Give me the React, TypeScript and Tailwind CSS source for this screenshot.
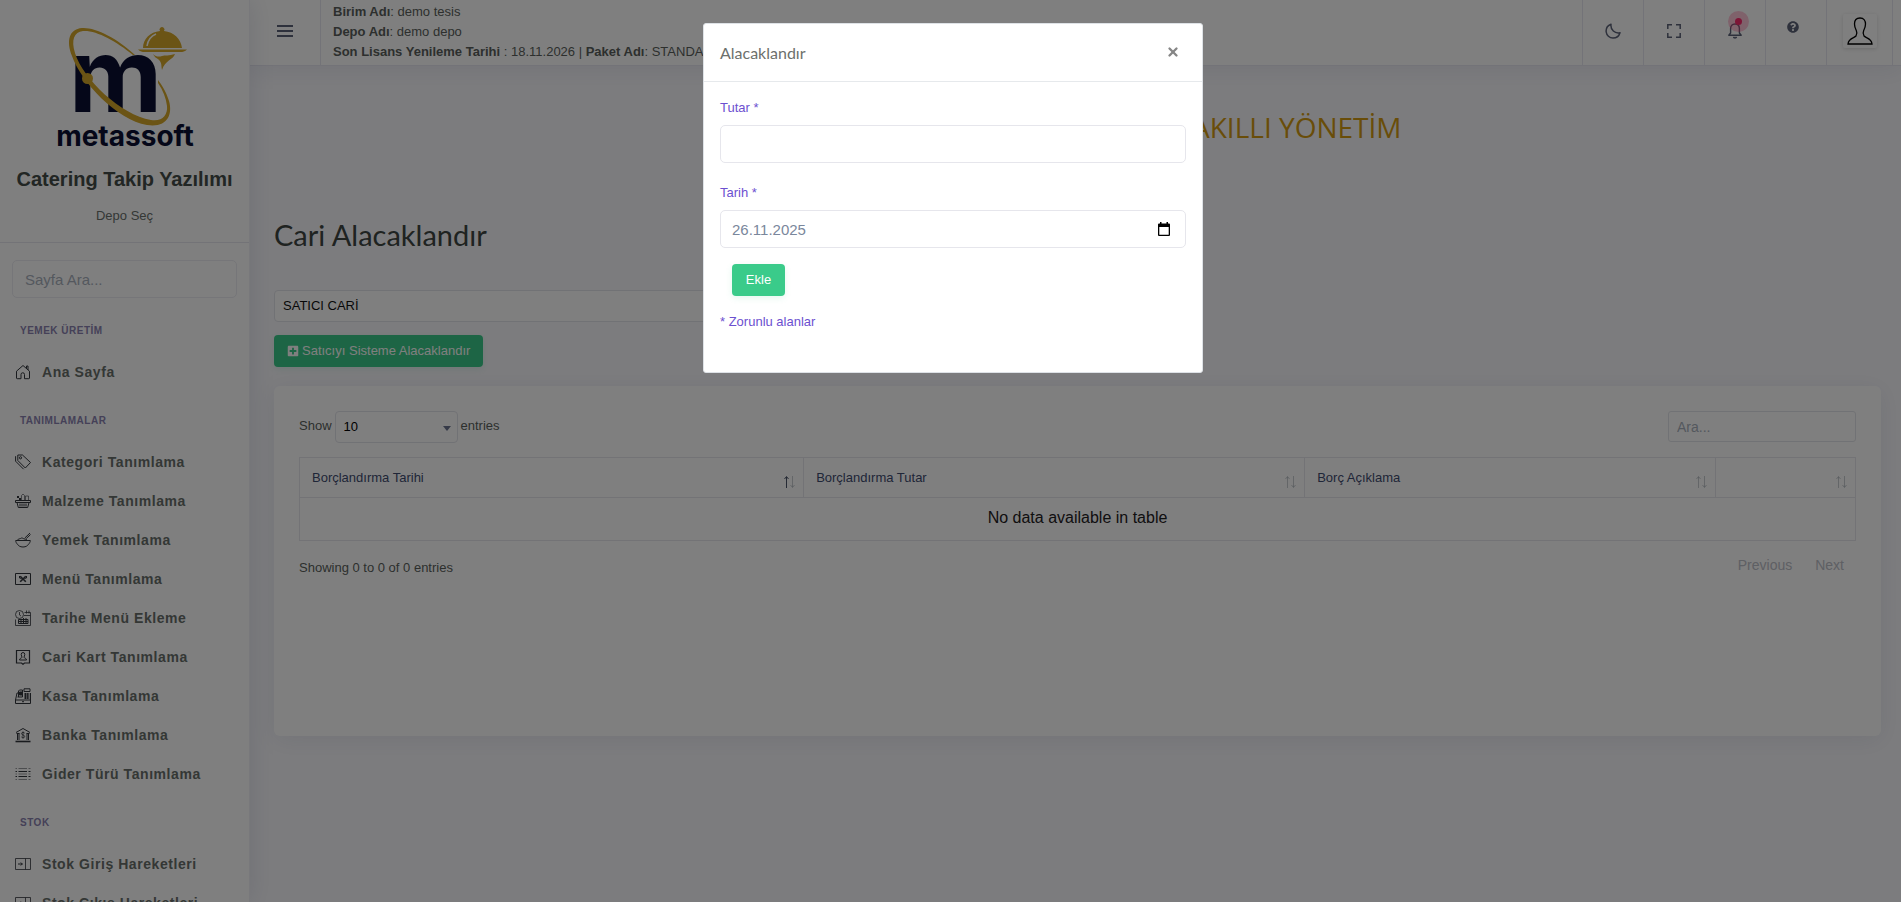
import { useState, type ReactNode } from 'react';
import { X } from 'lucide-react';
import { FaPlusSquare, FaQuestionCircle } from 'react-icons/fa';

type MenuItem = { label: string; icon: ReactNode };
type MenuGroup = { title: string; items: MenuItem[] };

const columns = [
    { label: 'Borçlandırma Tarihi', width: 'w-[32.4%]', sorted: true },
    { label: 'Borçlandırma Tutar', width: 'w-[32.2%]', sorted: false },
    { label: 'Borç Açıklama', width: 'w-[26.4%]', sorted: false },
    { label: '', width: '', sorted: false },
];

function Icon({ children }: { children: ReactNode }) {
    return (
        <svg viewBox="0 0 16 16" className="w-4 h-4 shrink-0" fill="none" stroke="currentColor" strokeWidth="1" aria-hidden="true">
            {children}
        </svg>
    );
}

const stockIcon = (
    <Icon>
        <path d="M.5 2.500h15v11H.5zM10.500 2.500v11" strokeOpacity=".8" />
        <path d="M3 8h4.500M5.800 6.500 7.300 8 5.800 9.500" />
    </Icon>
);

const menu: MenuGroup[] = [
    {
        title: 'YEMEK ÜRETİM',
        items: [
            {
                label: 'Ana Sayfa',
                icon: (
                    <Icon>
                        <path d="M1.500 7.200V14a.7.7 0 0 0 .7.700H6V10.500a1.600 1.600 0 0 1 3.500 0v4.200h4.300a.7.7 0 0 0 .7-.7V7.200L8 1.500zM11.500 4.500V2h1.500v4" />
                    </Icon>
                ),
            },
        ],
    },
    {
        title: 'TANIMLAMALAR',
        items: [
            {
                label: 'Kategori Tanımlama',
                icon: (
                    <Icon>
                        <path d="M2.800 1h4.700l8 7.500-5.200 5.500-7.500-7.500zM.6 2.200v5l8 8" />
                        <circle cx="5.500" cy="3.800" r="1.100" />
                    </Icon>
                ),
            },
            {
                label: 'Malzeme Tanımlama',
                icon: (
                    <Icon>
                        <path d="M.5 7.500h15v2H.5zM2 9.500l1.300 5h9.400l1.300-5M5 10.500v3M7 10.500v3M9 10.500v3M11 10.500v3" />
                        <path d="M6.500 7V2.500L8 1l1.500 1.500V7M10.500 7V3h3v4" strokeOpacity=".6" />
                        <path d="M2 3h2v2H2zM4 5h2v2H4z" fill="currentColor" stroke="none" />
                    </Icon>
                ),
            },
            {
                label: 'Yemek Tanımlama',
                icon: (
                    <Icon>
                        <path d="M.7 8.500h14.600c0 1.500-.8 2.700-1.800 3.800-1 1.400-2.400 2.700-5.500 2.700s-4.500-1.300-5.500-2.700C1.500 11.200.7 10 .7 8.500z" />
                        <path d="M2.500 8C3.500 6.500 4.800 7 5.500 6.500 6.500 5.500 8 6.200 8.800 6.800c.8.500 2 .2 3 .7M9.800 6 15 1M11.300 6.500 15.500 2.500" />
                    </Icon>
                ),
            },
            {
                label: 'Menü Tanımlama',
                icon: (
                    <Icon>
                        <path d="M.5 2.500h15v11H.5z" />
                        <path d="M5.200 5.200l5.600 5.600M10.800 5.200l-5.600 5.600" strokeWidth="1.600" />
                        <path d="M4.500 5v2l2 .5M11.500 5v2l-2 .5" />
                    </Icon>
                ),
            },
            {
                label: 'Tarihe Menü Ekleme',
                icon: (
                    <Icon>
                        <circle cx="4.500" cy="4.500" r="4" strokeOpacity=".8" />
                        <path d="M4.500 2v3l1.500 1M9.500 2.500h6v13H.5V9.500M9 5.500h6.500M11.500.5v3M14 .5v3" strokeOpacity=".8" />
                        <path d="M3.500 9.500h9.500v4H3.500zM3.500 11.500h9.500M6 9.500v4M8.500 8v5.500M11 8v5.500" />
                    </Icon>
                ),
            },
            {
                label: 'Cari Kart Tanımlama',
                icon: (
                    <Icon>
                        <path d="M1.500 1.500h13v12.500H9.500L8 15.300 6.500 14h-5z" strokeWidth="1.200" />
                        <path d="M6.200 5.500a1.800 2 0 0 1 3.600 0c0 1.300-.8 1.800-.8 2.800 0 .8 2.500.7 2.500 2.700h-7c0-2 2.500-1.900 2.500-2.700 0-1-.8-1.500-.8-2.800z" />
                    </Icon>
                ),
            },
            {
                label: 'Kasa Tanımlama',
                icon: (
                    <Icon>
                        <path d="M.5 12h15v3.500H.5zM.5 12 2 5h1.500M7 13.700h2M3.500 9V3l1-1h3v7M2.500 9h5" />
                        <path d="M9 .8h6v2.700H9zM15.500 12V5M9 6h5.500M9 8h5.500M9 10h5.500M10.500 5v6M12.700 5v6" />
                        <path d="M4.500 4h3v3h-3z" fill="currentColor" />
                    </Icon>
                ),
            },
            {
                label: 'Banka Tanımlama',
                icon: (
                    <Icon>
                        <path d="M1 5.500 8 1.500l7 4M1.500 6.500h3M11.500 6.500h3M2.500 6.500v6.500M4 6.500v6.500M12 6.500v6.500M13.500 6.500v6.500" />
                        <path d="M.5 14.500h15" strokeWidth="1.600" />
                        <path d="M9.700 6.200C9.200 5 6.500 5 6.500 6.700c0 1.600 3.200 1 3.200 2.800 0 1.600-2.800 1.700-3.400.3M8 4.500v7" strokeWidth=".8" />
                    </Icon>
                ),
            },
            {
                label: 'Gider Türü Tanımlama',
                icon: (
                    <Icon>
                        <path d="M.5 2.500h1.500M3.500 2.500h8.500M13.500 2.500h2M.5 8h1.500M3.500 8h8.500M13.500 8h2M.5 13.500h1.500M3.500 13.500h8.500M13.500 13.500h2" strokeOpacity=".5" />
                        <path d="M.5 5.500h1.500M3.500 5.500h8.500M13.500 5.500h2M.5 10.500h1.500M3.500 10.500h8.500M13.500 10.500h2" />
                    </Icon>
                ),
            },
        ],
    },
    {
        title: 'STOK',
        items: [
            { label: 'Stok Giriş Hareketleri', icon: stockIcon },
            { label: 'Stok Çıkış Hareketleri', icon: stockIcon },
        ],
    },
];

function Logo() {
    return (
        <svg viewBox="0 0 140 124" className="w-[140px] h-[124px] overflow-visible" role="img" aria-label="metassoft">
            <text x="14" y="88" fontFamily="Inter, sans-serif" fontWeight="700" fontSize="102" fill="#0a0f33">m</text>
            {/* Orbit around the letter */}
            <path
                fill="#d6a92a"
                fillRule="evenodd"
                d="M80 31C62 14 40 3 27 4 14 5 11 17 17 32 26 58 62 96 92 101 112 104 118 91 114 77 111 67 106 60 103 56L103 59C108 66 111 74 112 82 113 91 107 98 96 96 66 91 28 55 20 29 16 16 19 8 28 7 41 6 61 17 78 31Z"
            />
            <circle cx="32.500" cy="54.500" r="5.500" fill="#d6a92a" />
            {/* Serving dish */}
            <path fill="#d6a92a" d="M88 24c0-9 7-16 17-17a2.500 2.500 0 1 1 4 0c10 1 17 8 18 17zM83 25.500h49c-2 2-4 2.500-7 2.500H90c-3 0-5-.5-7-2.500zM98 30c3 3 6 3 9 2s7 0 13-2c-2 6-10 6-13 16-1-5 0-7-3-10-2-2-4-2-6-6z" />
            <path d="M92 22c1-6 4-10 9-12" fill="none" stroke="#fff" strokeWidth="1.500" />
            <text x="70" y="122" textAnchor="middle" fontFamily="Inter, sans-serif" fontWeight="700" fontSize="28" fill="#0a0f33">metassoft</text>
        </svg>
    );
}

function SortArrows({ sorted }: { sorted: boolean }) {
    return (
        <svg viewBox="0 0 12 14" className="w-3 h-3.5 shrink-0 mt-2" fill="none" stroke="#4a5568" aria-hidden="true">
            <path d="M3.500 13V2M1.500 4 3.500 1.500 5.500 4" strokeOpacity={sorted ? 1 : 0.3} />
            <path d="M9.500 1v11M7.500 10l2 2.500 2-2.500" strokeOpacity=".3" />
        </svg>
    );
}

function Sidebar() {
    return (
        <aside className="relative z-10 w-[250px] h-screen shrink-0 overflow-hidden bg-white border-r border-[#f1f1f6] shadow-[0_0_24px_rgba(25,42,90,0.12)]">
            <div className="flex flex-col items-center pt-6 border-b border-[#e6e6ee] pb-4">
                <Logo />
                <h2 className="mt-4 text-[20px] leading-[30px] font-bold text-[#444c48] whitespace-nowrap">Catering Takip Yazılımı</h2>
                <a href="#depo" className="mt-3 text-[13px] leading-5 text-[#6a706d]">Depo Seç</a>
            </div>
            <div className="px-3 pt-[17px] pb-[3px]">
                <input
                    type="text"
                    aria-label="Sayfa Ara"
                    placeholder="Sayfa Ara..."
                    className="w-full h-[38px] px-3 rounded-[5px] border border-[#ececf2] text-[15px] placeholder:text-[#a9b1bd]"
                />
            </div>
            <nav>
                {menu.map((group) => (
                    <div key={group.title}>
                        <h3 className="pt-[22px] pb-3.5 pl-5 text-[10px] leading-[15px] font-bold tracking-wider text-[#8a82b0]">{group.title}</h3>
                        <ul>
                            {group.items.map((item) => (
                                <li key={item.label}>
                                    <a href="#sayfa" className="flex items-center gap-[11px] h-[39px] pl-[15px] text-sm font-bold tracking-[0.04em] text-[#686f6b] whitespace-nowrap">
                                        <span className="text-[#33373d]">{item.icon}</span>
                                        {item.label}
                                    </a>
                                </li>
                            ))}
                        </ul>
                    </div>
                ))}
            </nav>
        </aside>
    );
}

function Topbar() {
    const cell = 'flex items-center justify-center w-[61px] border-l border-[#e6e6f0] text-[#5c6278]';
    return (
        <header className="flex h-[66px] bg-white border-b border-[#e6e6f0] shadow-[0_4px_24px_rgba(25,42,90,0.08)]">
            <button type="button" aria-label="Menü" className="w-[71px] flex items-center justify-center border-r border-[#e6e6f0] text-[#5c6278]">
                <svg viewBox="0 0 16 12" className="w-4 h-3 -mt-1" stroke="currentColor" strokeWidth="2" aria-hidden="true">
                    <path d="M0 1h16M0 6h16M0 11h16" />
                </svg>
            </button>
            <div className="flex-1 pl-3 pt-0.5 text-[13px] leading-5 text-[#5a5f5c] whitespace-nowrap overflow-hidden">
                <p><b>Birim Adı</b>: demo tesis</p>
                <p><b>Depo Adı</b>: demo depo</p>
                <p><b>Son Lisans Yenileme Tarihi</b> : 18.11.2026 | <b>Paket Adı</b>: STANDART</p>
            </div>
            <div className="flex pr-2">
                <button type="button" aria-label="Karanlık mod" className={cell}>
                    <svg viewBox="0 0 16 16" className="w-4 h-4 -mt-1" fill="none" stroke="currentColor" strokeWidth="1.500" strokeLinejoin="round" aria-hidden="true">
                        <path d="M6 1.200C2.500 2.500.8 5.500 1.200 9c.4 3.300 3.200 6 6.800 6 3.200 0 6-2 7-5.300C10 10.800 5.200 7 6 1.200z" />
                    </svg>
                </button>
                <button type="button" aria-label="Tam ekran" className={cell}>
                    <svg viewBox="0 0 14 14" className="w-3.5 h-3.5 -mt-1" fill="none" stroke="currentColor" strokeWidth="1.500" aria-hidden="true">
                        <path d="M5 .8H.8V5M9 .8h4.200V5M5 13.200H.8V9M9 13.200h4.200V9" />
                    </svg>
                </button>
                <button type="button" aria-label="Bildirimler" className={cell}>
                    <span className="relative -mt-1">
                        <svg viewBox="0 0 14 16" className="w-3.5 h-4" fill="none" stroke="currentColor" strokeWidth="1.400" aria-hidden="true">
                            <path d="M7 1C4.300 1 2.600 3 2.600 5.600V10L.8 12.300h12.400L11.400 10V5.600C11.400 3 9.700 1 7 1z" strokeLinejoin="round" />
                            <path d="M5 14.300c.9 1.200 3.100 1.200 4 0z" fill="currentColor" strokeWidth=".8" />
                        </svg>
                        <span className="absolute -top-3 left-0 w-[21px] h-[21px] rounded-full bg-[#ff3d7b]/30 flex items-center justify-center">
                            <span className="w-[7px] h-[7px] rounded-full bg-[#fb2b6c]" />
                        </span>
                    </span>
                </button>
                <button type="button" aria-label="Yardım" className={`${cell} pr-1.5`}>
                    <FaQuestionCircle className="w-3 h-3 mb-3" />
                </button>
                <button type="button" aria-label="Profil" className="w-[67px] flex items-center justify-center border-x border-[#e6e6f0]">
                    <span className="w-[34px] h-[34px] -mt-1 flex items-center justify-center rounded-[2px] bg-white shadow-[0_1px_4px_rgba(0,0,0,0.15)]">
                        <svg viewBox="0 0 26 28" className="w-[26px] h-7" fill="none" stroke="#000" strokeWidth="1.300" aria-hidden="true">
                            <path d="M13 1c-4 0-5.500 2.800-5.500 6 0 3 1 4.800 1.800 6.500.9 1.900.7 4-.3 5.500C7.500 21 1.500 20.800 1 27h24c-.5-6.200-6.500-6-8-8-1-1.500-1.200-3.600-.3-5.500.8-1.700 1.800-3.500 1.800-6.500 0-3.200-1.500-6-5.500-6z" />
                        </svg>
                    </span>
                </button>
            </div>
        </header>
    );
}

function DataTable() {
    return (
        <section className="mt-[19px] min-h-[350px] rounded-md bg-white p-[25px] shadow-[0_4px_24px_rgba(25,42,90,0.08)]">
            <div className="flex items-start justify-between">
                <label className="flex items-center gap-[3px] text-[13px] text-[#5a5f5c]">
                    <span className="pb-0.5">Show</span>
                    <span className="relative">
                        <select defaultValue="10" className="appearance-none w-[123px] h-8 px-2 rounded border border-[#e2e4ea] bg-white text-[13px] text-black">
                            <option>10</option>
                            <option>25</option>
                            <option>50</option>
                        </select>
                        <svg viewBox="0 0 8 5" className="absolute right-[7px] top-[15px] w-2 h-[5px] pointer-events-none" fill="#6c7590" aria-hidden="true">
                            <path d="M0 0h8L4 5z" />
                        </svg>
                    </span>
                    <span className="pb-0.5">entries</span>
                </label>
                <input
                    type="search"
                    aria-label="Ara"
                    placeholder="Ara..."
                    className="w-[188px] h-[31px] px-2 rounded-[3px] border border-[#e2e4ea] text-sm placeholder:text-[#a9b1bd]"
                />
            </div>

            <table className="mt-3.5 w-full table-fixed border-collapse border border-[#e6e6ec]">
                <thead>
                    <tr>
                        {columns.map((col, i) => (
                            <th key={i} className={`${col.width} h-10 border border-[#e6e6ec] pl-3 pr-2 text-left text-[13px] font-normal text-[#3e4c70]`}>
                                <span className="flex items-center justify-between">
                                    <span>{col.label}</span>
                                    <SortArrows sorted={col.sorted} />
                                </span>
                            </th>
                        ))}
                    </tr>
                </thead>
                <tbody>
                    <tr>
                        <td colSpan={4} className="h-[43px] pb-0.5 text-center text-base text-[#1e2022]">No data available in table</td>
                    </tr>
                </tbody>
            </table>

            <div className="mt-3.5 flex items-start justify-between">
                <p className="mt-[3px] text-[13px] leading-5 text-[#5a5f5c]">Showing 0 to 0 of 0 entries</p>
                <div className="flex gap-[23px] pr-3 text-sm text-[#bcc0c8]">
                    <button type="button" disabled>Previous</button>
                    <button type="button" disabled>Next</button>
                </div>
            </div>
        </section>
    );
}

function CreditModal({ onClose }: { onClose: () => void }) {
    const [date, setDate] = useState('26.11.2025');
    const label = 'block text-[13px] leading-5 text-[#6c50d0]';
    const field = 'w-full h-[38px] px-[11px] rounded-[5px] border border-[#e6e6ec] bg-white text-[15px] text-[#7a879c]';

    return (
        <div className="fixed inset-0 z-20 flex items-start justify-center bg-black/50 pt-[23px] pl-[5px]">
            <div role="dialog" aria-labelledby="modal-title" className="w-[500px] max-w-full rounded-[3px] border border-[#dee2e6] bg-white">
                <div className="flex items-center justify-between h-[58px] pl-4 pr-[22px] border-b border-[#e6e9ec]">
                    <h5 id="modal-title" className="font-[Lato,sans-serif] text-base text-[#6c706c]">Alacaklandır</h5>
                    <button type="button" aria-label="Kapat" onClick={onClose} className="pb-0.5 text-[#868686]">
                        <X className="w-3.5 h-3.5" strokeWidth={4} />
                    </button>
                </div>
                <form className="px-4 pt-4 pb-10" onSubmit={(e) => e.preventDefault()}>
                    <label htmlFor="tutar" className={label}>Tutar *</label>
                    <input id="tutar" type="text" className={`${field} mt-[7px]`} />

                    <label htmlFor="tarih" className={`${label} mt-5`}>Tarih *</label>
                    <div className="relative mt-[7px]">
                        <input id="tarih" type="text" value={date} onChange={(e) => setDate(e.target.value)} className={field} />
                        <svg viewBox="0 0 12 14" className="absolute right-4 top-3 w-3 h-3.5" aria-hidden="true">
                            <path fill="#000" fillRule="evenodd" d="M2 0h1.500v1.500h5V0H10v1.500h1A1 1 0 0 1 12 2.500V13a1 1 0 0 1-1 1H1a1 1 0 0 1-1-1V2.500a1 1 0 0 1 1-1h1zM1.300 5v7.700h9.400V5z" />
                        </svg>
                    </div>

                    <button type="submit" className="block mt-4 ml-3 w-[53px] h-8 rounded bg-[#3acb8a] text-[13px] font-medium text-white shadow-[0_2px_6px_rgba(58,203,138,0.15)]">
                        Ekle
                    </button>
                    <p className="mt-4 text-[13px] leading-5 text-[#6c50d0]">* Zorunlu alanlar</p>
                </form>
            </div>
        </div>
    );
}

export default function App() {
    const [open, setOpen] = useState(true);

    return (
        <div className="flex h-screen overflow-hidden bg-[#f9f9fd] font-['Liberation_Sans',Arial,sans-serif]">
            <Sidebar />
            <div className="flex-1 min-w-0">
                <Topbar />
                <main className="pl-6 pr-5">
                    <div className="pt-[43px] mx-auto w-[648px] max-w-full text-right font-['Open_Sans',sans-serif] text-[28px] leading-9 text-[#d39b12]">AKILLI YÖNETİM</div>
                    <h1 className="mt-[72px] font-[Lato,sans-serif] text-[29px] leading-9 text-[#3e4643]">Cari Alacaklandır</h1>
                    <select aria-label="Cari" className="block appearance-none mt-[37px] w-1/2 h-8 px-2 rounded border border-[#e2e4ea] bg-white text-[13px] text-[#111]">
                        <option>SATICI CARİ</option>
                    </select>
                    <button
                        type="button"
                        onClick={() => setOpen(true)}
                        className="mt-[13px] flex items-center gap-[3px] h-8 px-[13px] rounded bg-[#3acb8a] text-[13px] text-white shadow-[0_2px_6px_rgba(58,203,138,0.15)]"
                    >
                        <FaPlusSquare className="w-3 h-3" />
                        Satıcıyı Sisteme Alacaklandır
                    </button>
                    <DataTable />
                </main>
            </div>
            {open && <CreditModal onClose={() => setOpen(false)} />}
        </div>
    );
}
